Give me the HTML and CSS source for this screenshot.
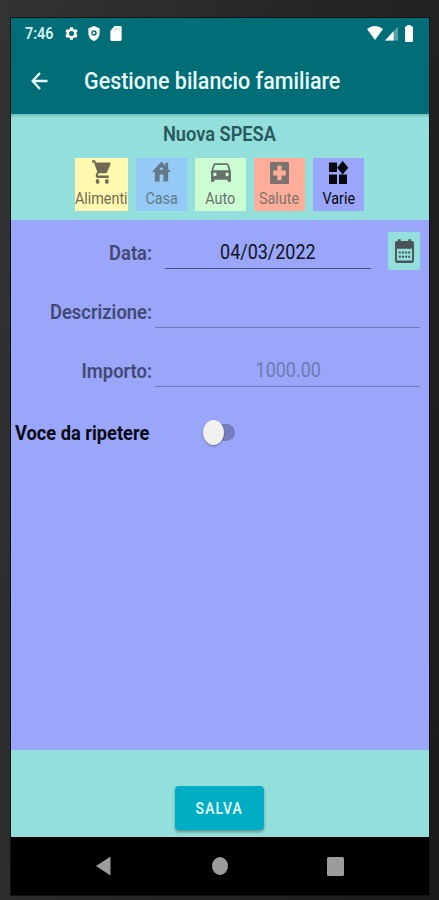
FILE: index.html
```html
<!DOCTYPE html>
<html lang="it">
<head>
<meta charset="utf-8">
<title>Gestione bilancio familiare</title>
<link rel="stylesheet" href="styles.css">
</head>
<body>
<div class="phone">
  <header class="top">
    <div class="status">
      <span class="clock narrow">7:46</span>
      <svg class="gear" viewBox="0 0 14 14"><circle cx="7" cy="7" r="4.1" fill="none" stroke="currentColor" stroke-width="2.8"/><path d="M7 .2v3M7 10.8v3M1.2 3.6l2.4 1.5M10.4 8.9l2.4 1.5M1.2 10.4l2.4-1.5M10.4 5.1l2.4-1.5" stroke="currentColor" stroke-width="3.2"/></svg>
      <svg class="shield" viewBox="0 0 12 16"><path fill="currentColor" fill-rule="evenodd" d="M6 0L12 2.3V7.500C12 11.500 9.500 14.800 6 16C2.500 14.800 0 11.500 0 7.500V2.300ZM6 4.600a2.900 2.900 0 1 0 0 5.800A2.900 2.900 0 0 0 6 4.600Z"/><path fill="currentColor" d="M4.700 5.600L7.800 7.500L4.700 9.400Z"/></svg>
      <svg class="card" viewBox="0 0 12 16"><path fill="currentColor" d="M4.500 0H10.500Q12 0 12 1.500V14.500Q12 16 10.500 16H1.500Q0 16 0 14.500V5Z"/><path d="M4.700 2.500v2M7 2.500v2M9.300 2.500v2" stroke="#7fb6bb" stroke-width=".8"/></svg>
      <svg class="wifi" viewBox="0 0 16 14"><path fill="currentColor" d="M0 3Q8-3 16 3L8 14Z"/></svg>
      <svg class="signal" viewBox="0 0 14 15"><path fill="currentColor" opacity=".35" d="M0 15L14 0V15Z"/><path fill="currentColor" d="M0 15L9.300 5V15Z"/></svg>
      <svg class="battery" viewBox="0 0 8 17"><path fill="currentColor" d="M2.200 0H5.800V1.200H7Q8 1.200 8 2.200V16Q8 17 7 17H1Q0 17 0 16V2.200Q0 1.200 1 1.200H2.200Z"/></svg>
    </div>
    <div class="appbar">
      <svg class="back" viewBox="0 0 18 20"><path d="M17.500 10H2M9.500 1.500L1.800 10L9.500 18.500" fill="none" stroke="currentColor" stroke-width="2.500"/></svg>
      <h1 class="title narrow">Gestione bilancio familiare</h1>
    </div>
  </header>

  <section class="picker">
    <h2 class="heading narrow">Nuova SPESA</h2>
    <div class="cats">
      <div class="cat food"><svg viewBox="1 1.800 21.500 20.400" preserveAspectRatio="none"><path d="M7 18c-1.100 0-1.990.9-1.990 2S5.900 22 7 22s2-.9 2-2-.9-2-2-2zM1 2v2h2l3.600 7.590-1.350 2.450c-.16.280-.25.610-.25.960 0 1.100.9 2 2 2h12v-2H7.420c-.14 0-.25-.11-.25-.25l.03-.12.900-1.630h7.450c.75 0 1.410-.41 1.750-1.030l3.580-6.490c.08-.14.120-.31.120-.480 0-.55-.45-1-1-1H5.210l-.94-2H1zm16 16c-1.100 0-1.990.9-1.990 2s.89 2 1.990 2 2-.9 2-2-.9-2-2-2z"/></svg><span class="narrow">Alimenti</span></div>
      <div class="cat home"><svg viewBox="2 2.500 20 18" preserveAspectRatio="none"><path d="M19 9.300V4h-3v2.600L12 3 2 12h3v8h5v-6h4v6h5v-8h3l-3-2.700zM10 10c0-1.100.9-2 2-2s2 .9 2 2h-4z"/></svg><span class="narrow">Casa</span></div>
      <div class="cat auto"><svg viewBox="3 4.800 18 16.200" preserveAspectRatio="none"><path d="M18.920 6.010C18.720 5.420 18.160 5 17.500 5h-11c-.66 0-1.210.42-1.420 1.010L3 12v8c0 .55.450 1 1 1h1c.55 0 1-.45 1-1v-1h12v1c0 .55.450 1 1 1h1c.55 0 1-.45 1-1v-8l-2.080-5.990zM6.500 16c-.83 0-1.500-.67-1.500-1.500S5.670 13 6.500 13s1.500.67 1.500 1.500S7.330 16 6.500 16zm11 0c-.83 0-1.500-.67-1.500-1.500s.67-1.500 1.500-1.500 1.500.67 1.500 1.500-.67 1.500-1.500 1.500zM5 11l1.500-4.500h11L19 11H5z"/></svg><span class="narrow">Auto</span></div>
      <div class="cat health"><svg viewBox="3 3 18 18" preserveAspectRatio="none"><path d="M20 3H4Q3 3 3 4V20Q3 21 4 21H20Q21 21 21 20V4Q21 3 20 3zm-2 11h-4v4h-4v-4H6v-4h4V6h4v4h4v4z"/></svg><span class="narrow">Salute</span></div>
      <div class="cat misc"><svg viewBox="3 1.700 20 19.300" preserveAspectRatio="none"><path d="M13 13v8h8v-8h-8zM3 21h8v-8H3v8zM3 3v8h8V3H3zm13.660-1.310L11 7.340 16.660 13l5.660-5.660-5.660-5.650z"/></svg><span class="narrow">Varie</span></div>
    </div>
  </section>

  <main class="form">
    <div class="row date">
      <label class="label narrow">Data:</label>
      <div class="field"><span class="value narrow">04/03/2022</span></div>
      <div class="calendar"><svg viewBox="0 0 20 25"><path fill-rule="evenodd" d="M3 2V0H6V2H14V0H17V2H18Q20 2 20 4.500V22.500Q20 25 18 25H2Q0 25 0 22.500V4.500Q0 2 2 2ZM2 10V22.500H18V10Z"/><path d="M4 14H16M4 18.500H16" stroke="currentColor" stroke-width="2.200" stroke-dasharray="2.100 1.200"/></svg></div>
    </div>
    <div class="row">
      <label class="label narrow">Descrizione:</label>
      <div class="field faint"></div>
    </div>
    <div class="row">
      <label class="label amount narrow">Importo:</label>
      <div class="field faint"><span class="value hint narrow">1000.00</span></div>
    </div>
    <div class="repeat">
      <span class="repeat-label narrow">Voce da ripetere</span>
      <span class="switch"><span class="thumb"></span></span>
    </div>
  </main>

  <footer class="actions"><button class="save"><span class="narrow">SALVA</span></button></footer>

  <nav class="nav">
    <svg viewBox="0 0 15 20"><path d="M14.500.5V19.500L0 10Z"/></svg>
    <svg viewBox="0 0 16 18" preserveAspectRatio="none"><ellipse cx="8" cy="9" rx="8" ry="9"/></svg>
    <svg viewBox="0 0 17 19"><rect width="17" height="19" rx="1.500"/></svg>
  </nav>
</div>
</body>
</html>
```
FILE: styles.css
```css
* { box-sizing: border-box; }
body {
  margin: 0;
  height: 900px;
  padding: 18px 10px 5px 11px;
  background: linear-gradient(100deg, #333 0%, #262626 50%, #1b1b1b 100%);
  font-family: Roboto, "Liberation Sans", sans-serif;
  overflow: hidden;
}
h1, h2 { margin: 0; }
svg { display: block; flex: none; fill: currentColor; }
.phone {
  height: 877px;
  display: flex;
  flex-direction: column;
  box-shadow: 0 0 0 1px #101214;
}
.narrow {
  display: inline-block;
  flex: none;
  white-space: nowrap;
  transform: scaleX(.87);
}
.top { height: 96px; background: #006d77; color: #e9fbfb; }
.status { height: 30px; display: flex; align-items: center; padding: 0 16px 0 14px; color: #fff; }
.clock { width: 40px; font-size: 16.5px; font-weight: 600; transform-origin: left; color: #d8f1f2; }
.gear { width: 13px; height: 15px; }
.shield { width: 12px; height: 15px; margin-left: 10px; }
.card { width: 12px; height: 15px; margin-left: 10px; }
.wifi { width: 16px; height: 14px; margin-left: auto; }
.signal { width: 13px; height: 15px; margin-left: 2px; }
.battery { width: 8px; height: 17px; margin-left: 7px; }
.appbar { height: 65px; display: flex; align-items: center; padding: 0 0 0 20px; }
.back { width: 17px; height: 20px; margin-right: 36px; }
.title { font-size: 24px; font-weight: 500; line-height: 30px; transform: scaleX(.895); transform-origin: left; }

.picker {
  height: 106px;
  padding-top: 9px;
  background: linear-gradient(#75bcbb, #92dfdc 4px);
  display: flex;
  flex-direction: column;
  align-items: center;
}
.heading { font-size: 19.5px; font-weight: 600; line-height: 24px; color: #27585c; transform: scaleX(.935); margin-right: 1px; }
.cats {
  margin-top: 11px;
  align-self: stretch;
  padding-left: 64px;
  display: grid;
  grid-template-columns: 53px 51px 51px 51px 51px;
  column-gap: 8px;
}
.cat { height: 53px; display: flex; flex-direction: column; align-items: center; color: #69716c; font-size: 16.5px; line-height: 20px; }
.cat svg { width: 20px; height: 24px; margin: 2px 0 5px; }
.food { background: #fffaaf; color: #716b56; }
.home { background: #94caf5; color: #647988; }
.home svg { height: 21px; width: 19px; margin: 3px 0 7px; }
.auto { background: #ccfdd2; }
.auto svg { height: 19px; margin: 5px 0 7px; }
.health { background: #ffad9b; color: #7c7370; }
.health svg { width: 19px; height: 22px; margin: 4px 0 5px; }
.misc { background: #9aa6f9; color: #07080e; }
.misc svg { height: 23px; margin: 3px 0 5px; }

.form { height: 530px; background: #9aa6f9; padding: 11px 9px 0 4px; }
.row { height: 59px; display: flex; align-items: flex-start; }
.label { width: 137px; text-align: right; transform: scaleX(.92); transform-origin: right; font-size: 20px; font-weight: 600; line-height: 24px; margin-top: 10px; color: #424974; }
.field { flex: 1; margin-left: 3px; height: 38px; border-bottom: 1px solid #485079; text-align: center; }
.faint { height: 38px; border-color: #7079b6; }
.date .field { flex: none; width: 206px; margin: 0 17px 0 13px; }
.value { font-size: 21px; line-height: 24px; margin-top: 9px; color: #10131f; transform: scaleX(.855); }
.hint { color: #7079b1; margin-left: 2px; }
.calendar { width: 33px; height: 38px; margin-top: 1px; background: #92dfdc; border-radius: 2px; color: #4b5456; display: grid; place-items: center; }
.calendar svg { width: 19px; height: 24px; }
.repeat { display: flex; align-items: center; height: 50px; }
.repeat-label { width: 188px; font-size: 20.5px; font-weight: 700; transform: scaleX(.89); transform-origin: left; color: #070914; }
.switch { width: 32px; height: 17px; margin-top: -2px; border-radius: 9px; background: #757dbd; display: flex; align-items: center; }
.thumb { width: 21px; height: 25px; border-radius: 50%; background: #f0f0ee; box-shadow: 0 1px 2px #0005; }

.actions { height: 87px; background: #92dfdc; display: flex; justify-content: center; align-items: flex-start; padding-top: 36px; }
.save { width: 89px; height: 44px; margin-right: 1px; padding: 0; border: 0; border-radius: 4px; background: #00adc2; color: #dff8fb; font: 600 16px Roboto, sans-serif; letter-spacing: 1.3px; box-shadow: 0 2px 3px #0005; }
.nav { flex: 1; background: #000; color: #9c9c9c; display: flex; align-items: center; padding-left: 85px; }
.nav svg { width: 15px; height: 20px; }
.nav svg:nth-child(2) { width: 16px; height: 18px; margin-left: 101px; }
.nav svg:nth-child(3) { width: 17px; height: 19px; margin-left: 99px; }
```
